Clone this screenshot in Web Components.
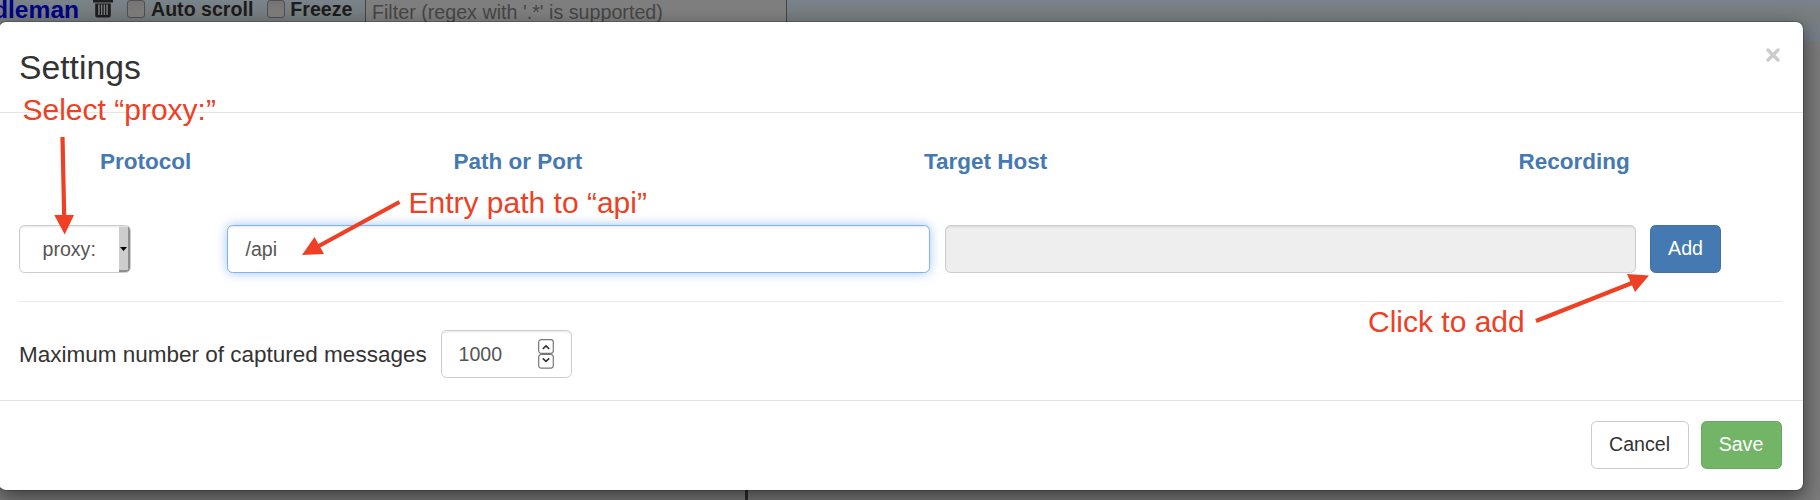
<!DOCTYPE html>
<html lang="en">
<head>
<meta charset="utf-8">
<title>Settings</title>
<style>
html,body{margin:0;height:500px;overflow:hidden;background:#7c7c7c}
body{font-family:"Liberation Sans",Arial,sans-serif;position:relative}
</style>
</head>
<body>
<settings-page></settings-page>
<script>
const define=(name,html)=>{
  const t=document.createElement('template');t.innerHTML=html;
  customElements.define(name,class extends HTMLElement{
    constructor(){super();this.attachShadow({mode:'open'}).append(t.content.cloneNode(true));}
  });
};

define('tool-bar',`<style>
:host{display:flex;height:41px;background:linear-gradient(#79838b,#797f7f 40%,#75818d);position:relative;white-space:nowrap;color:#1c1c1c;font:bold 19.6px/18px "Liberation Sans",sans-serif}
.brand{color:#00008a;font-size:24.6px;line-height:20px;width:100px;margin-left:-7px;height:20px}
svg{width:20px;height:20px;display:block;margin-top:-1px;flex:none}
i{width:16px;height:16px;border:1px solid #505050;border-radius:3px;background:linear-gradient(#757373,#858282);margin-left:14px;flex:none}
.lab{margin:0 0 0 6px}
.f{width:420px;height:35px;border:1px solid #424548;background:linear-gradient(#7e7e7e,#848484);font-weight:normal;font-size:19.7px;color:#474747;margin:-2px 0 0 13px;box-sizing:content-box}
.f span{display:block;padding:4px 0 0 5.500px}
</style><span class="brand">dleman</span>
<svg viewBox="0 0 20 20"><path fill="#1e1e1e" fill-rule="evenodd" d="M6 0h8v1h6v2.600H0V1h6zM2.200 4.600h15.600V16.500q0 2-2 2H4.200q-2 0-2-2zM5.200 5.500v10.500h1.500v-10.500zM8 5.500v10.500h1.300v-10.500zM10.700 5.500v10.500h1.300v-10.500zM13.300 5.500v10.500h1.500v-10.500z"/></svg>
<i></i><span class="lab">Auto scroll</span><i></i><span class="lab" style="margin-left:5px">Freeze</span><div class="f"><span>Filter (regex with '.*' is supported)</span></div>`);

define('push-button',`<style>
:host{display:flex;align-items:center;justify-content:center;box-sizing:border-box;height:48px;border:1.4px solid var(--line,#ccc);border-radius:5.6px;background:var(--fill,#fff);color:var(--ink,#333);font-size:19.6px;padding-bottom:1px}
</style><slot></slot>`);

define('text-field',`<style>
:host{display:flex;align-items:center;box-sizing:border-box;height:48px;border:1.4px solid #ccc;border-radius:5.6px;background:#fff;color:#555;font-size:19.6px;padding-left:17.500px;box-shadow:inset 0 1.4px 1.4px rgba(0,0,0,.075)}
:host([focused]){border-color:#80b4ec;box-shadow:inset 0 1.4px 1.4px rgba(0,0,0,.075),0 0 11px rgba(102,160,233,.6)}
:host([disabled]){background:#eee}
</style><slot></slot>`);

define('protocol-select',`<style>
:host{display:flex;box-sizing:border-box;width:112px;height:48px;border:1.4px solid #ccc;border-radius:5.6px;overflow:hidden;color:#555;font-size:19.6px;line-height:46px;box-shadow:inset 0 1.4px 1.4px rgba(0,0,0,.075)}
span{flex:1;padding-left:22.500px}
b{width:11px;background:#cdcdcd;box-sizing:border-box;border:solid #8d8d8d;border-width:0 2.500px 2.500px 0;border-top:1.500px solid #e3e3e3;display:flex;align-items:center;justify-content:center}
svg{width:7px;height:4px;flex:none}
</style><span><slot></slot></span><b><svg viewBox="0 0 7 4"><path d="M0 0h7L3.500 4z"/></svg></b>`);

define('number-stepper',`<style>
:host{display:block}
svg{display:block;width:16px;height:30px}
</style><svg viewBox="0 0 16 30" fill="#fff" stroke="#777" stroke-width="1.200"><rect x=".7" y=".7" width="14.600" height="13.600" rx="2.500"/><rect x=".7" y="15.500" width="14.600" height="13.600" rx="2.500"/><path fill="none" stroke="#333" stroke-width="1.600" d="M4.800 9.800 8 6.800l3.200 3M4.800 19.300 8 22.300l3.200-3"/></svg>`);

define('column-heads',`<style>
:host{display:grid;grid-template-columns:353.500px 470.500px 594.500px 1fr;padding-left:81px;height:32px;line-height:32px;font-weight:bold;font-size:22.500px;color:#4479b3}
</style><slot></slot>`);

define('modal-dialog',`<style>
:host{display:flex;flex-direction:column;box-sizing:border-box;position:absolute;left:-2px;top:21px;width:1805.500px;height:470px;background:#fff;border-radius:8px;border:1px solid rgba(0,0,0,.2);background-clip:padding-box;box-shadow:0 7px 21px rgba(0,0,0,.5);color:#333}
header{height:91px;box-sizing:border-box;border-bottom:1px solid #e5e5e5;padding:0 21px 0 20px;display:flex;justify-content:space-between}
h4{margin:23px 0 0;font-weight:normal;font-size:33.700px;line-height:44px}
header svg{width:16px;height:16px;margin:25px 1px 0 0}
main{height:287px;box-sizing:border-box;padding:33px 20px 0}
.row{display:flex;margin-top:47px}
hr{border:0;border-top:1px solid #eaeaea;margin:28px 1px 0 0}
.max{display:flex;align-items:center;margin-top:28px;font-size:22.500px}
footer{flex:1;border-top:1px solid #e5e5e5;padding:20px 21px 0 0;display:flex;justify-content:flex-end;gap:12px}
</style>
<header><h4>Settings</h4><svg viewBox="0 0 16 16"><path d="M3 3l10 10M13 3 3 13" stroke="#ccc" stroke-width="3.400" stroke-linecap="round"/></svg></header>
<main>
<column-heads><span>Protocol</span><span>Path or Port</span><span>Target Host</span><span>Recording</span></column-heads>
<div class="row"><protocol-select>proxy:</protocol-select><text-field focused style="width:703px;margin-left:96px">/api</text-field><text-field disabled style="width:691px;margin-left:15px"></text-field><push-button style="width:71px;margin-left:14px;--fill:#4479b1;--line:#3f70a6;--ink:#fff">Add</push-button></div>
<hr>
<div class="max"><span style="width:408px;white-space:nowrap;padding-top:2px">Maximum number of captured messages</span><text-field style="width:131px;margin-left:14px;padding-left:16.500px"><span style="width:79px">1000</span><number-stepper></number-stepper></text-field></div>
</main>
<footer><push-button style="width:98px">Cancel</push-button><push-button style="width:81px;--fill:#73b566;--line:#68a95b;--ink:#fff">Save</push-button></footer>`);

define('call-out',`<style>
:host{position:absolute;font-size:30px;line-height:34px;color:#ed4024;white-space:nowrap}
</style><slot></slot>`);

define('arrow-layer',`<style>
:host{position:absolute;left:0;top:0}
svg{display:block;width:1820px;height:500px}
</style><svg viewBox="0 0 1820 500" fill="#ed4024" stroke="#ed4024"><g stroke-width="4.200"><path d="M62.500 137 64.200 217M399.500 202 317 247M1536 321 1632 283"/></g><g stroke="none"><path d="M54.300 215 74 215 64.700 234.500zM314.500 237 324 254 302 255zM1627 274 1649 275.500 1635 292z"/></g></svg>`);

define('settings-page',`<style>
:host{display:block;position:relative;width:1820px;height:500px;overflow:hidden}
.split{position:absolute;left:745px;top:41px;width:3px;height:459px;background:#2c2c2c}
</style><tool-bar></tool-bar><div class="split"></div><modal-dialog></modal-dialog><arrow-layer></arrow-layer>
<call-out style="left:22.500px;top:93px">Select “proxy:”</call-out>
<call-out style="left:408.500px;top:186px">Entry path to “api”</call-out>
<call-out style="left:1368px;top:305px">Click to add</call-out>`);
</script>
</body>
</html>
